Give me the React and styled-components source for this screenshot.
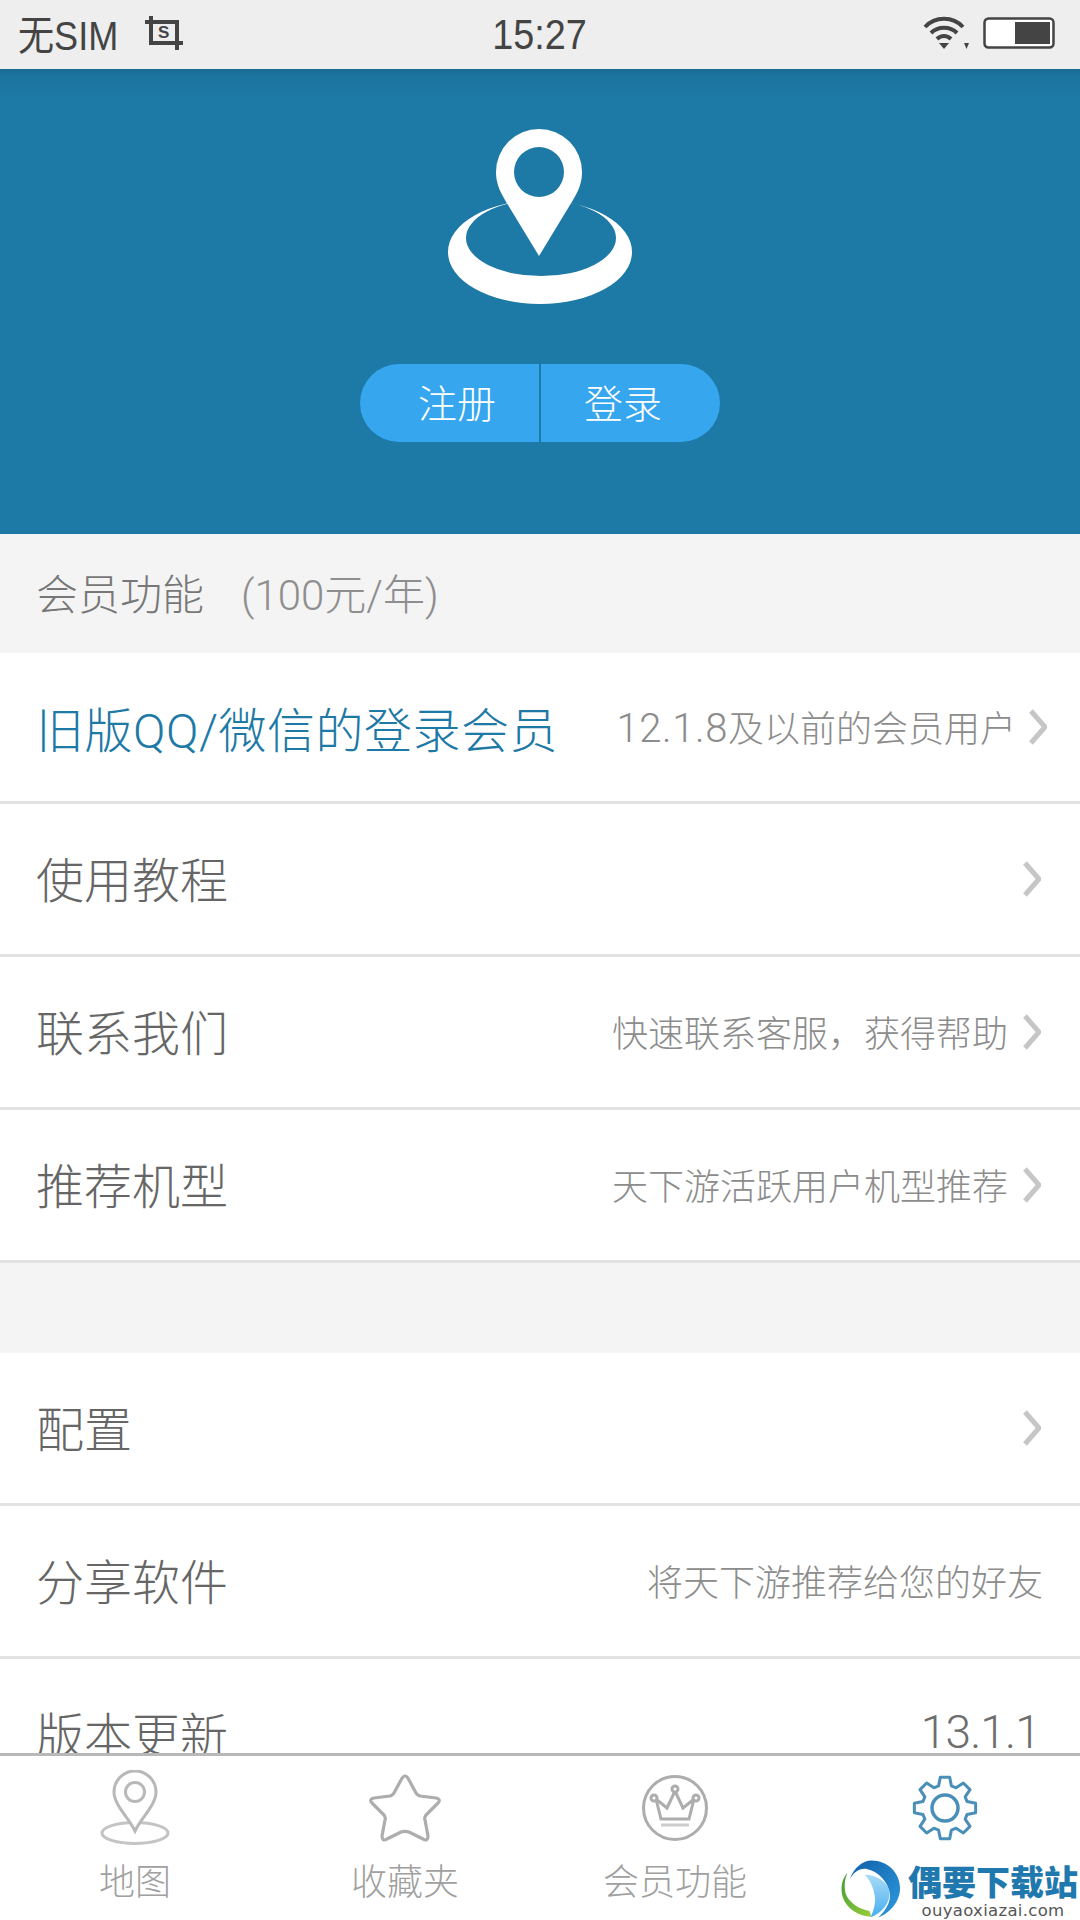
import React from "react";
import styled, { createGlobalStyle } from "styled-components";

const SANS = `Roboto, "Liberation Sans", "Noto Sans CJK SC", sans-serif`;

const Global = createGlobalStyle`
  html, body { margin: 0; padding: 0; background: #fff; }
  body { font-family: ${SANS}; }
  #root { width: 1080px; height: 1920px; }
`;

const Page = styled.div`
  position: relative;
  width: 1080px;
  height: 1920px;
  display: flex;
  flex-direction: column;
  overflow: hidden;
  background: #fff;
`;

const StatusBar = styled.header`
  flex: 0 0 69px;
  display: grid;
  grid-template-columns: 1fr auto 1fr;
  align-items: center;
  padding: 0 25px 4px 18px;
  box-sizing: border-box;
  background: #eeeeee;
  color: #444;
  font-family: "Liberation Sans", "Noto Sans CJK SC", sans-serif;
`;
const StatusLeft = styled.div`
  display: flex;
  align-items: center;
  gap: 27px;
  font-size: 41px;
`;
const StatusCarrier = styled.span`
  display: inline-block;
  transform: scaleX(0.88);
  transform-origin: left center;
  margin: -2px -14px 0 0;
`;
const StatusTime = styled.div`
  font-size: 42px;
  margin: 4px 0 0 6px;
  transform: scaleX(0.9);
`;
const StatusRight = styled.div`
  display: flex;
  justify-content: flex-end;
  align-items: center;
  gap: 14px;
`;

const Hero = styled.section`
  flex: 0 0 465px;
  display: flex;
  flex-direction: column;
  align-items: center;
  padding-top: 60px;
  box-sizing: border-box;
  background: linear-gradient(#1a6a90 0, #1c749e 6px, #1d79a5 30px);
`;
const HeroMark = styled.svg`
  display: block;
  width: 200px;
  height: 176px;
`;
const AuthPill = styled.div`
  margin-top: 59px;
  width: 360px;
  height: 78px;
  display: grid;
  grid-template-columns: 1fr 2px 1fr;
  border-radius: 39px;
  overflow: hidden;
  background: #36a6ee;
`;
const AuthButton = styled.div`
  display: flex;
  align-items: center;
  justify-content: center;
  box-sizing: border-box;
  padding: 0 ${(p) => (p.$first ? 0 : 15)}px 4px ${(p) => (p.$first ? 15 : 0)}px;
  color: #fff;
  font-size: 39px;
  font-weight: 300;
`;
const AuthDivider = styled.div`
  background: #1d79a5;
`;

const Scroll = styled.main`
  flex: 1;
  min-height: 0;
  overflow: hidden;
  background: #f4f4f4;
`;
const SectionHead = styled.div`
  height: 119px;
  box-sizing: border-box;
  display: flex;
  align-items: center;
  padding: 0 0 4px 36px;
  font-size: 42px;
  font-weight: 300;
  color: #777;
`;
const SectionNote = styled.span`
  margin-left: 37px;
  color: #8e8e8e;
`;
const Spacer = styled.div`
  height: 90px;
`;
const Row = styled.div`
  box-sizing: border-box;
  height: ${(p) => p.$h || 153}px;
  display: flex;
  align-items: center;
  justify-content: space-between;
  padding: 0 ${(p) => p.$right}px 0 36px;
  background: #fff;
  border-bottom: 3px solid #e2e2e2;
`;
const RowTitle = styled.div`
  font-size: 48px;
  font-weight: 300;
  margin-bottom: ${(p) => (p.$accent ? 1 : 5)}px;
  letter-spacing: ${(p) => (p.$accent ? 0.5 : 0)}px;
  color: ${(p) => (p.$accent ? "#1d79a5" : "#666")};
`;
const RowEnd = styled.div`
  display: flex;
  align-items: center;
  gap: ${(p) => p.$gap}px;
`;
const RowNote = styled.div`
  font-size: 36px;
  font-weight: 300;
  margin-bottom: 3px;
  color: #8c8c8c;
`;
const NoteDigits = styled.span`
  font-size: 40px;
  letter-spacing: 0.6px;
`;
const Version = styled.div`
  font-size: 46px;
  font-weight: 300;
  letter-spacing: -0.8px;
  margin-bottom: 4px;
  color: #6e6e6e;
`;
const ChevronSvg = styled.svg`
  display: block;
  width: 18px;
  height: 36px;
`;

const TabBar = styled.nav`
  flex: 0 0 167px;
  box-sizing: border-box;
  display: grid;
  grid-template-columns: repeat(4, 270px);
  border-top: 3px solid #b8b8b8;
  background: #fff;
`;
const Tab = styled.div`
  display: flex;
  flex-direction: column;
  align-items: center;
  padding-top: 14px;
`;
const TabIcon = styled.svg`
  display: block;
  width: 80px;
  height: 76px;
`;
const TabLabel = styled.div`
  margin-top: 17px;
  font-size: 36px;
  font-weight: 300;
  line-height: 40px;
  color: #a0a0a0;
`;

const Watermark = styled.div`
  position: absolute;
  right: 2px;
  bottom: 0;
  width: 238px;
  height: 62px;
  display: flex;
  gap: 7px;
  background: #fff;
`;
const WatermarkText = styled.div`
  display: flex;
  flex-direction: column;
  align-items: center;
`;
const WatermarkName = styled.div`
  font-size: 34px;
  font-weight: 900;
  line-height: 40px;
  margin-top: 5px;
  color: #1f78ae;
  white-space: nowrap;
`;
const WatermarkUrl = styled.div`
  font-family: "DejaVu Sans", sans-serif;
  font-size: 16.5px;
  line-height: 16px;
  letter-spacing: 0.3px;
  color: #555;
`;

const Chevron = () => (
  <ChevronSvg viewBox="0 0 18 36">
    <polyline points="2,2 16,18 2,34" fill="none" stroke="#c6c6c6" strokeWidth="5" />
  </ChevronSvg>
);

const gearPath = (() => {
  const teeth = 8;
  const pts = [];
  for (let i = 0; i < teeth; i++) {
    const a = (i * 2 * Math.PI) / teeth - Math.PI / 2;
    const step = (2 * Math.PI) / teeth;
    [
      [-0.5, 23],
      [-0.27, 31],
      [0.27, 31],
      [0.5, 23],
    ].forEach(([k, r]) => {
      const t = a + k * step * 0.72;
      pts.push(`${(40 + r * Math.cos(t)).toFixed(2)},${(38 + r * Math.sin(t)).toFixed(2)}`);
    });
  }
  return pts.join(" ");
})();

const MapIcon = () => (
  <TabIcon viewBox="0 0 80 76">
    <g fill="none" stroke="#b8b8b8" strokeWidth="3">
      <ellipse cx="40" cy="63" rx="33" ry="10.5" stroke="#c4c4c4" />
      <path d="M40 61 C34 48 19 35 19 22 A21 21 0 0 1 61 22 C61 35 46 48 40 61 Z" fill="#fff" />
      <circle cx="40" cy="22" r="9.5" />
    </g>
  </TabIcon>
);
const StarIcon = () => (
  <TabIcon viewBox="0 0 80 76">
    <path
      d="M40 6 C42 6 43 8 44 10 L51 23 C52 25 53 25 55 26 L71 28 C75 29 75 31 73 33 L61 45 C60 47 59 48 60 50 L63 66 C63 70 61 71 58 69 L44 62 C41 61 39 61 36 62 L22 69 C19 71 17 70 17 66 L20 50 C21 48 20 47 19 45 L7 33 C5 31 5 29 9 28 L25 26 C27 25 28 25 29 23 L36 10 C37 8 38 6 40 6 Z"
      fill="none"
      stroke="#adadad"
      strokeWidth="3.2"
    />
  </TabIcon>
);
const CrownIcon = () => (
  <TabIcon viewBox="0 0 80 76">
    <g fill="none" stroke="#adadad" strokeWidth="3">
      <circle cx="40" cy="38" r="31.5" />
      <path d="M21 29 L26 49 L54 49 L59 29 L48 38 L40 21 L32 38 Z" />
      <circle cx="40" cy="19" r="3" fill="#fff" />
      <circle cx="19" cy="28" r="3" fill="#fff" />
      <circle cx="61" cy="28" r="3" fill="#fff" />
      <line x1="26" y1="55" x2="54" y2="55" stroke="#cccccc" />
    </g>
  </TabIcon>
);
const GearIcon = () => (
  <TabIcon viewBox="0 0 80 76">
    <g fill="none" stroke="#4a8fb8" strokeWidth="3" strokeLinejoin="round">
      <polygon points={gearPath} />
      <circle cx="40" cy="38" r="13" strokeWidth="3.5" />
    </g>
  </TabIcon>
);

const rowsA = [
  {
    title: "旧版QQ/微信的登录会员",
    note: (
      <>
        <NoteDigits>12.1.8</NoteDigits>及以前的会员用户
      </>
    ),
    accent: true,
    chevron: true,
    right: 33,
    gap: 13,
    h: 151,
  },
  { title: "使用教程", chevron: true, right: 39, gap: 15 },
  { title: "联系我们", note: "快速联系客服，获得帮助", chevron: true, right: 39, gap: 15 },
  { title: "推荐机型", note: "天下游活跃用户机型推荐", chevron: true, right: 39, gap: 15 },
];
const rowsB = [
  { title: "配置", chevron: true, right: 39, gap: 15 },
  { title: "分享软件", note: "将天下游推荐给您的好友", right: 37, gap: 0 },
  { title: "版本更新", version: "13.1.1", right: 40, gap: 0 },
];

const ListRow = ({ title, note, accent, chevron, version, right, gap, h }) => (
  <Row $right={right} $h={h}>
    <RowTitle $accent={accent}>{title}</RowTitle>
    <RowEnd $gap={gap}>
      {note && <RowNote>{note}</RowNote>}
      {version && <Version>{version}</Version>}
      {chevron && <Chevron />}
    </RowEnd>
  </Row>
);

export default function App() {
  return (
    <Page>
      <Global />
      <StatusBar>
        <StatusLeft>
          <StatusCarrier>无SIM</StatusCarrier>
          <svg width="38" height="34" viewBox="0 0 38 34">
            <path d="M6 0 V27 H38 M0 6 H32 V34" fill="none" stroke="#444" strokeWidth="4" />
            <text x="13" y="22" fontSize="17" fontWeight="700" fill="#444">S</text>
          </svg>
        </StatusLeft>
        <StatusTime>15:27</StatusTime>
        <StatusRight>
          <svg width="46" height="34" viewBox="0 0 46 34">
            <g fill="none" stroke="#444" strokeWidth="4">
              <path d="M2 11 C12 0 30 0 40 11" />
              <path d="M8 17 C15 10 27 10 34 17" />
              <path d="M14 23 C18 19 24 19 28 23" />
            </g>
            <path d="M16 27 L26 27 L21 33 Z" fill="#444" />
            <path d="M41 27 L46 27 L43.5 33 Z" fill="#444" />
          </svg>
          <svg width="72" height="32" viewBox="0 0 72 32">
            <rect x="1.5" y="1.5" width="69" height="29" rx="4" fill="#fff" stroke="#444" strokeWidth="2.5" />
            <rect x="32" y="5" width="35" height="22" fill="#444" />
          </svg>
        </StatusRight>
      </StatusBar>

      <Hero>
        <HeroMark viewBox="440 129 200 176">
          <path
            fillRule="evenodd"
            fill="#fff"
            d="M448 252 A92 52 0 1 0 632 252 A92 52 0 1 0 448 252 Z M466 238 A75 38 0 1 0 616 238 A75 38 0 1 0 466 238 Z"
          />
          <path
            fill="#fff"
            fillRule="evenodd"
            d="M539 256 L505 200 C499 190 496 182 496 172 A43 43 0 0 1 582 172 C582 182 579 190 573 200 Z M514 172 A25 25 0 1 0 564 172 A25 25 0 1 0 514 172 Z"
          />
        </HeroMark>
        <AuthPill>
          <AuthButton $first>注册</AuthButton>
          <AuthDivider />
          <AuthButton>登录</AuthButton>
        </AuthPill>
      </Hero>

      <Scroll>
        <SectionHead>
          会员功能<SectionNote>(100元/年)</SectionNote>
        </SectionHead>
        {rowsA.map((r) => (
          <ListRow key={r.title} {...r} />
        ))}
        <Spacer />
        {rowsB.map((r) => (
          <ListRow key={r.title} {...r} />
        ))}
      </Scroll>

      <TabBar>
        <Tab>
          <MapIcon />
          <TabLabel>地图</TabLabel>
        </Tab>
        <Tab>
          <StarIcon />
          <TabLabel>收藏夹</TabLabel>
        </Tab>
        <Tab>
          <CrownIcon />
          <TabLabel>会员功能</TabLabel>
        </Tab>
        <Tab>
          <GearIcon />
        </Tab>
      </TabBar>

      <Watermark>
        <svg width="64" height="62" viewBox="0 0 64 62">
          <defs>
            <linearGradient id="wmBlue" x1="0" y1="0" x2="1" y2="1">
              <stop offset="0" stopColor="#0f5fa8" />
              <stop offset="1" stopColor="#2f9be0" />
            </linearGradient>
            <linearGradient id="wmSky" x1="0" y1="0" x2="0" y2="1">
              <stop offset="0" stopColor="#a9dbf6" />
              <stop offset="1" stopColor="#45aef0" />
            </linearGradient>
            <linearGradient id="wmGreen" x1="0" y1="0" x2="1" y2="1">
              <stop offset="0" stopColor="#3f9e33" />
              <stop offset="1" stopColor="#9ccc3c" />
            </linearGradient>
          </defs>
          <path d="M26 16 C38 16 52 24 52 36 C52 46 44 56 32 61 C36 52 38 44 36 36 C35 28 30 20 26 16 Z" fill="url(#wmSky)" />
          <path d="M10 21 C15 8 24 1 33 1 C50 1 63 14 63 30 C63 44 53 56 40 61 C50 52 54 42 52 34 C50 24 40 12 28 10 C20 9 14 14 10 21 Z" fill="url(#wmBlue)" />
          <path d="M8 14 C2 20 0 30 3 40 C7 52 20 60 33 60 L31 54 C20 52 10 46 6 36 C4 28 5 20 8 14 Z" fill="url(#wmGreen)" />
        </svg>
        <WatermarkText>
          <WatermarkName>偶要下载站</WatermarkName>
          <WatermarkUrl>ouyaoxiazai.com</WatermarkUrl>
        </WatermarkText>
      </Watermark>
    </Page>
  );
}
